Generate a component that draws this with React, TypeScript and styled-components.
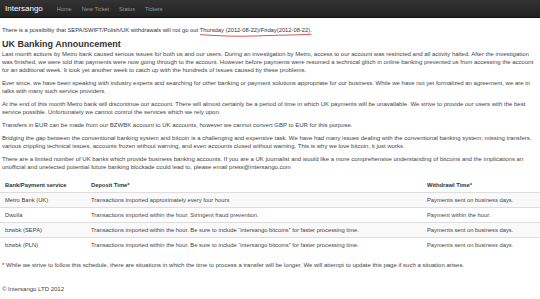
import React from "react"
import styled, { createGlobalStyle } from "styled-components"

const GlobalStyle = createGlobalStyle`
  body {
    margin: 0;
    background: #fff;
    font-family: "Liberation Sans", Arial, sans-serif;
    color: #333;
  }
`

const rows = [
  {
    bank: "Metro Bank (UK)",
    deposit: "Transactions imported approximately every four hours",
    withdraw: "Payments sent on business days.",
  },
  {
    bank: "Dwolla",
    deposit: "Transactions imported within the hour. Stringent fraud prevention.",
    withdraw: "Payment within the hour.",
  },
  {
    bank: "bzwbk (SEPA)",
    deposit:
      "Transactions imported within the hour. Be sure to include \u201cintersango bitcoins\u201d for faster processing time.",
    withdraw: "Payments sent on business days.",
  },
  {
    bank: "bzwbk (PLN)",
    deposit:
      "Transactions imported within the hour. Be sure to include \u201cintersango bitcoins\u201d for faster processing time.",
    withdraw: "Payments sent on business days.",
  },
]

export default function App() {
  return (
    <>
      <GlobalStyle />
      <Navbar>
        <Brand>Intersango</Brand>
        <NavLink>Home</NavLink>
        <NavLink>New Ticket</NavLink>
        <NavLink>Status</NavLink>
        <NavLink>Tickets</NavLink>
      </Navbar>
      <Content>
        <Notice>
          There is a possibility that SEPA/SWIFT/Polish/UK withdrawals will not go out{" "}
          <Marked>
            Thursday (2012-08-22)/Friday(2012-08-22)
            <Scribble viewBox="0 0 116 6" preserveAspectRatio="none">
              <path d="M1 2 C 20 3.5, 40 4.5, 60 3.5 S 100 2.5, 115 1.5" />
            </Scribble>
          </Marked>
          .
        </Notice>
        <Heading>UK Banking Announcement</Heading>
        <Para>
          Last month actions by Metro bank caused serious issues for both us and our users. During an
          investigation by Metro, access to our account was restricted and all activity halted. After the
          investigation was finished, we were told that payments were now going through to the account. However
          before payments were resumed a technical glitch in online banking prevented us from accessing the
          account for an additional week. It took yet another week to catch up with the hundreds of issues caused
          by these problems.
        </Para>
        <Para>
          Ever since, we have been speaking with industry experts and searching for other banking or payment
          solutions appropriate for our business. While we have not yet formalized an agreement, we are in talks
          with many such service providers.
        </Para>
        <Para>
          At the end of this month Metro bank will discontinue our account. There will almost certainly be a
          period of time in which UK payments will be unavailable. We strive to provide our users with the best
          service possible. Unfortunately we cannot control the services which we rely upon.
        </Para>
        <Para>
          Transfers in EUR can be made from our BZWBK account to UK accounts, however we cannot convert GBP to
          EUR for this purpose.
        </Para>
        <Para>
          Bridging the gap between the conventional banking system and bitcoin is a challenging and expensive
          task. We have had many issues dealing with the conventional banking system; missing transfers, various
          crippling technical issues, accounts frozen without warning, and even accounts closed without warning.
          This is why we love bitcoin, it just works.
        </Para>
        <Para>
          There are a limited number of UK banks which provide business banking accounts. If you are a UK
          journalist and would like a more comprehensive understanding of bitcoins and the implications an
          unofficial and unelected potential future banking blockade could lead to, please email
          press@intersango.com
        </Para>
      </Content>
      <Table>
        <colgroup>
          <col style={{ width: 86 }} />
          <col style={{ width: 336 }} />
          <col />
        </colgroup>
        <thead>
          <tr>
            <Th>Bank/Payment service</Th>
            <Th>Deposit Time*</Th>
            <Th>Withdrawl Time*</Th>
          </tr>
        </thead>
        <tbody>
          {rows.map((r, i) => (
            <Row key={r.bank} $striped={i % 2 === 0}>
              <Td>{r.bank}</Td>
              <Td>{r.deposit}</Td>
              <Td>{r.withdraw}</Td>
            </Row>
          ))}
        </tbody>
      </Table>
      <Content>
        <Footnote>
          * While we strive to follow this schedule, there are situations in which the time to process a transfer
          will be longer. We will attempt to update this page if such a situation arises.
        </Footnote>
        <Footer>&copy; Intersango LTD 2012</Footer>
      </Content>
    </>
  )
}

const Navbar = styled.div`
  display: flex;
  align-items: center;
  height: 17px;
  padding: 0 5px;
  background: linear-gradient(#333, #222);
  border-bottom: 1px solid #111;
`

const Brand = styled.span`
  color: #fff;
  font-size: 8px;
  margin-right: 14px;
`

const NavLink = styled.span`
  color: #999;
  font-size: 5.6px;
  margin-right: 10px;
`

const Content = styled.div`
  padding: 0 2px;
`

const Notice = styled.p`
  font-size: 5.8px;
  line-height: 8px;
  margin: 8px 0 4px;
`

const Marked = styled.span`
  position: relative;
  display: inline-block;
`

const Scribble = styled.svg`
  position: absolute;
  left: -1px;
  bottom: -4px;
  width: calc(100% + 3px);
  height: 5px;
  overflow: visible;
  path {
    fill: none;
    stroke: #c9302c;
    stroke-width: 0.9;
  }
`

const Heading = styled.h2`
  font-size: 9px;
  line-height: 12px;
  font-weight: bold;
  color: #333;
  margin: 0 0 1px;
`

const Para = styled.p`
  font-size: 6px;
  line-height: 7.8px;
  margin: 0 0 5.5px;
  color: #444;
`

const Table = styled.table`
  width: 100%;
  border-collapse: collapse;
  table-layout: fixed;
  margin: 4px 0 9px;
  font-size: 5.8px;
  color: #444;
`

const Th = styled.th`
  text-align: left;
  font-weight: bold;
  color: #333;
  padding: 4px 5px;
  border-bottom: 1px solid #ddd;
  white-space: nowrap;
`

const Row = styled.tr<{ $striped: boolean }>`
  background: ${(p) => (p.$striped ? "#f9f9f9" : "#fff")};
`

const Td = styled.td`
  padding: 3.5px 5px;
  height: 7px;
  border-top: 1px solid #ddd;
  white-space: nowrap;
  overflow: hidden;
`

const Footnote = styled.p`
  font-size: 6px;
  line-height: 8px;
  margin: 0 0 17px;
  color: #444;
`

const Footer = styled.div`
  font-size: 6px;
  color: #444;
`
